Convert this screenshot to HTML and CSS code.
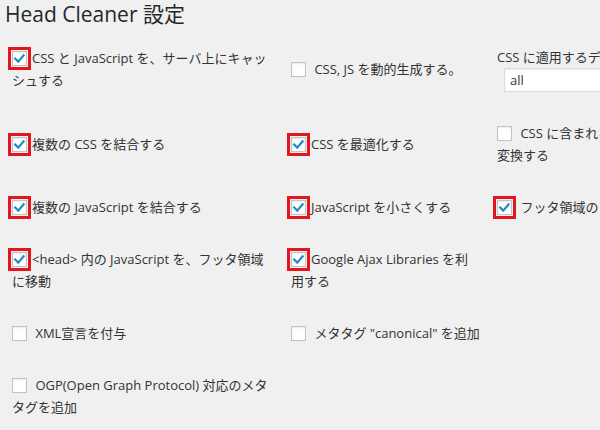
FILE: index.html
```html
<!DOCTYPE html>
<html lang="ja">
<head>
<meta charset="utf-8">
<title>Head Cleaner 設定</title>
<link rel="stylesheet" href="styles.css">
</head>
<body>
<h1 class="title">Head Cleaner 設定</h1>
<div class="table">
  <div class="row">
    <label class="opt"><span class="cb mark"><svg viewBox="0 0 15 15"><path d="M3.2 7.6 L6.2 10.6 L11.6 4.4"/></svg></span>CSS と JavaScript を、サーバ上にキャッ<br>シュする</label>
    <label class="opt"><span class="cb"></span> CSS, JS を動的生成する。</label>
    <div class="opt nowrap">
      <div>CSS に適用するデフォルトのメディアタイプ</div>
      <div class="select">all</div>
    </div>
  </div>
  <div class="row">
    <label class="opt"><span class="cb mark"><svg viewBox="0 0 15 15"><path d="M3.2 7.6 L6.2 10.6 L11.6 4.4"/></svg></span>複数の CSS を結合する</label>
    <label class="opt"><span class="cb mark"><svg viewBox="0 0 15 15"><path d="M3.2 7.6 L6.2 10.6 L11.6 4.4"/></svg></span>CSS を最適化する</label>
    <label class="opt nowrap"><span class="cb"></span> CSS に含まれる相対パスを絶対パスに<br>変換する</label>
  </div>
  <div class="row">
    <label class="opt"><span class="cb mark"><svg viewBox="0 0 15 15"><path d="M3.2 7.6 L6.2 10.6 L11.6 4.4"/></svg></span>複数の JavaScript を結合する</label>
    <label class="opt"><span class="cb mark"><svg viewBox="0 0 15 15"><path d="M3.2 7.6 L6.2 10.6 L11.6 4.4"/></svg></span>JavaScript を小さくする</label>
    <label class="opt nowrap"><span class="cb mark"><svg viewBox="0 0 15 15"><path d="M3.2 7.6 L6.2 10.6 L11.6 4.4"/></svg></span> フッタ領域の JavaScript を結合する</label>
  </div>
  <div class="row">
    <label class="opt"><span class="cb mark"><svg viewBox="0 0 15 15"><path d="M3.2 7.6 L6.2 10.6 L11.6 4.4"/></svg></span>&lt;head&gt; 内の JavaScript を、フッタ領域<br>に移動</label>
    <label class="opt"><span class="cb mark"><svg viewBox="0 0 15 15"><path d="M3.2 7.6 L6.2 10.6 L11.6 4.4"/></svg></span>Google Ajax Libraries を利<br>用する</label>
    <div class="opt"></div>
  </div>
  <div class="row">
    <label class="opt"><span class="cb"></span> XML宣言を付与</label>
    <label class="opt"><span class="cb"></span> メタタグ "canonical" を追加</label>
    <div class="opt"></div>
  </div>
  <div class="row">
    <label class="opt"><span class="cb"></span> OGP(Open Graph Protocol) 対応のメタ<br>タグを追加</label>
    <div class="opt"></div>
    <div class="opt"></div>
  </div>
</div>
</body>
</html>
```
FILE: styles.css
```css
html, body {
  margin: 0;
  padding: 0;
  overflow: hidden;
}
body {
  width: 600px;
  height: 430px;
  background: #f0f0f0;
  color: #333;
  font-family: "Open Sans", "Noto Sans CJK JP", sans-serif;
  font-size: 13px;
  line-height: 22px;
}
.title {
  margin: 0;
  padding-left: 5px;
  font-size: 21px;
  line-height: 29px;
  font-weight: 400;
  color: #23282d;
}
.table {
  margin-top: 2px;
  width: 900px;
}
.row {
  display: grid;
  grid-template-columns: 279px 206px 400px;
  align-items: center;
  padding: 15px 0 15px 12px;
}
.opt {
  display: block;
}
.nowrap {
  white-space: nowrap;
}
.cb {
  display: inline-block;
  position: relative;
  box-sizing: border-box;
  width: 15px;
  height: 15px;
  margin: -3px 5px 0 0;
  vertical-align: middle;
  background: #fff;
  border: 1px solid #bfc3c7;
  box-shadow: inset 0 1px 2px rgba(0, 0, 0, 0.08);
}
.cb svg {
  position: absolute;
  left: -1px;
  top: -1px;
  width: 15px;
  height: 15px;
}
.cb svg path {
  fill: none;
  stroke: #1e8cbe;
  stroke-width: 2.2;
  stroke-linecap: square;
}
.mark {
  outline: 3px solid #e3161d;
  outline-offset: 1px;
}
.select {
  margin-left: 7px;
  box-sizing: border-box;
  width: 200px;
  height: 24px;
  padding: 0 5px;
  line-height: 22px;
  background: #fff;
  border: 1px solid #dcdcdc;
  box-shadow: inset 0 1px 2px rgba(0, 0, 0, 0.07);
  color: #333;
}
```
